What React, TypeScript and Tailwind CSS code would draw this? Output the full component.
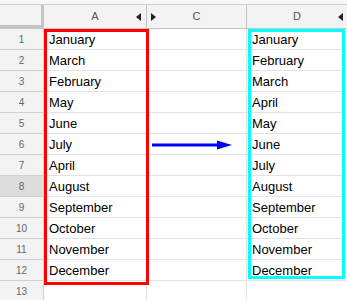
const left = ['January', 'March', 'February', 'May', 'June', 'July', 'April', 'August', 'September', 'October', 'November', 'December', ''];
const right = ['January', 'February', 'March', 'April', 'May', 'June', 'July', 'August', 'September', 'October', 'November', 'December', ''];

const LeftTri = () => (
  <svg width="5" height="8" viewBox="0 0 5 8" className="block">
    <polygon points="5,0 0,4 5,8" fill="#222" />
  </svg>
);

const RightTri = () => (
  <svg width="5" height="8" viewBox="0 0 5 8" className="block">
    <polygon points="0,0 5,4 0,8" fill="#222" />
  </svg>
);

export default function App() {
  return (
    <div className="relative w-[347px] h-[300px] overflow-hidden bg-white font-['Liberation_Sans',Arial,sans-serif]">
      <div className="h-[5px] bg-[#f8f8f8] border-b border-[#d0d0d0]" />

      {/* column headers */}
      <div className="flex h-[24px] bg-[#f3f3f3] text-[11px] text-[#555]">
        <div className="w-[44px] shrink-0 border-r-[3px] border-b-[4px] border-[#c4c4c4]" />
        <div className="relative w-[103px] shrink-0 flex items-center justify-center border-r border-b border-[#c4c4c4]">
          A
          <span className="absolute right-[5px] top-[8px]"><LeftTri /></span>
        </div>
        <div className="relative w-[100px] shrink-0 flex items-center justify-center border-r border-b border-[#c4c4c4]">
          C
          <span className="absolute left-[4px] top-[8px]"><RightTri /></span>
        </div>
        <div className="relative w-[100px] shrink-0 flex items-center justify-center border-b border-[#c4c4c4]">
          D
          <span className="absolute right-[4px] top-[8px]"><LeftTri /></span>
        </div>
      </div>

      {/* rows */}
      {left.map((name, i) => (
        <div key={i} className="flex h-[21px] text-[13px] text-black">
          <div
            className={`w-[44px] shrink-0 flex items-center justify-center pt-[1px] text-[10px] text-[#666] border-r border-b border-[#d0d0d0] ${
              i === 7 ? 'bg-[#dcdcdc]' : 'bg-[#f3f3f3]'
            }`}
          >
            {i + 1}
          </div>
          <div className="w-[103px] shrink-0 flex items-center pl-[5px] pt-[1px] border-r border-b border-[#e2e2e2]">{name}</div>
          <div className="w-[100px] shrink-0 border-r border-b border-[#e2e2e2]" />
          <div className="w-[100px] shrink-0 flex items-center pl-[5px] pt-[1px] border-b border-[#e2e2e2]">{right[i]}</div>
        </div>
      ))}

      {/* highlight boxes */}
      <div className="absolute left-[44px] top-[29px] w-[105px] h-[256px] border-[3px] border-[#ff0000]" />
      <div className="absolute left-[248px] top-[29px] w-[97px] h-[250px] border-[3px] border-[#00ffff]" />

      {/* arrow */}
      <svg className="absolute left-[150px] top-[139px]" width="86" height="12" viewBox="0 0 86 12">
        <line x1="2" y1="6" x2="70" y2="6" stroke="#0000ff" strokeWidth="3" />
        <polygon points="67,1.5 82,6 67,10.5" fill="#0000ff" />
      </svg>
    </div>
  );
}
